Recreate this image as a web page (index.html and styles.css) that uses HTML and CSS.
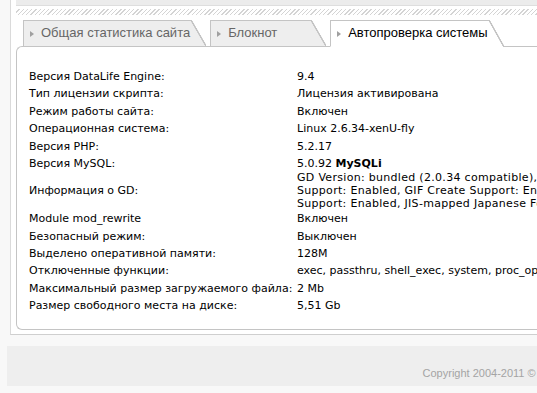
FILE: index.html
```html
<!DOCTYPE html>
<html>
<head>
    <meta charset="utf-8">
    <title>Автопроверка системы</title>
    <link rel="stylesheet" href="styles.css">
</head>
<body>
    <div class="page">
        <div class="frame">
            <div class="topbar"></div>
            <div class="hatch"></div>

            <ul class="tabs">
                <li class="tab">Общая статистика сайта</li>
                <li class="tab">Блокнот</li>
                <li class="tab tab-active">Автопроверка системы</li>
            </ul>

            <div class="panel">
                <table class="info">
                    <tr><td class="label">Версия DataLife Engine:</td><td>9.4</td></tr>
                    <tr><td class="label">Тип лицензии скрипта:</td><td>Лицензия активирована</td></tr>
                    <tr><td class="label">Режим работы сайта:</td><td>Включен</td></tr>
                    <tr><td class="label">Операционная система:</td><td>Linux 2.6.34-xenU-fly</td></tr>
                    <tr><td class="label">Версия PHP:</td><td>5.2.17</td></tr>
                    <tr><td class="label">Версия MySQL:</td><td>5.0.92 <b>MySQLi</b></td></tr>
                    <tr class="row-gd">
                        <td class="label">Информация о GD:</td>
                        <td class="gd">GD Version: bundled (2.0.34 compatible), FreeType Support: Enabled, FreeType Linkage: with freetype, GIF Read<br>Support: Enabled, GIF Create Support: Enabled, JPG Support: Enabled, PNG Support: Enabled, WBMP<br>Support: Enabled, JIS-mapped Japanese Font Support: Disabled</td>
                    </tr>
                    <tr><td class="label">Module mod_rewrite</td><td>Включен</td></tr>
                    <tr><td class="label">Безопасный режим:</td><td>Выключен</td></tr>
                    <tr><td class="label">Выделено оперативной памяти:</td><td>128M</td></tr>
                    <tr><td class="label">Отключенные функции:</td><td>exec, passthru, shell_exec, system, proc_open, popen, show_source</td></tr>
                    <tr><td class="label">Максимальный размер загружаемого файла:</td><td>2 Mb</td></tr>
                    <tr><td class="label">Размер свободного места на диске:</td><td>5,51 Gb</td></tr>
                </table>
            </div>
        </div>

        <div class="footer">Copyright 2004-2011 &copy; SoftNews Media Group. All rights reserved.</div>
    </div>
</body>
</html>
```

FILE: styles.css
```css
* {
    box-sizing: border-box;
}

body {
    margin: 0;
    background: #f8f8f8;
    overflow: hidden;
    font-family: "DejaVu Sans", Verdana, sans-serif;
    font-size: 11px;
    color: #000;
}

.page {
    width: 759px;
    padding-left: 7px;
}

/* outer white frame */
.frame {
    margin-left: 3px;
    padding: 0 0 4px 5px;
    background: #fff;
    border-left: 1px solid #dadada;
    border-bottom: 1px solid #cfcfcf;
}

.topbar {
    height: 6px;
    background: #ececec;
    border-bottom: 1px solid #dedede;
}

.hatch {
    height: 6px;
    margin-top: 3px;
    background: repeating-linear-gradient(135deg, #fff 0 2px, #d4d4d4 2px 3px);
}

/* tabs */
.tabs {
    display: flex;
    list-style: none;
    margin: 5px 0 -1px;
    padding: 0 0 0 7px;
}

.tab {
    position: relative;
    z-index: 1;
    min-width: 101px;
    height: 27px;
    margin-right: 19px;
    padding: 0 1px 1px 6px;
    background: #eeeeee;
    border: 1px solid #c4c4c4;
    border-right: none;
    font-family: "Liberation Sans", Arial, sans-serif;
    font-size: 13px;
    line-height: 24px;
    color: #666;
    white-space: nowrap;
}

.tab::before {
    content: "";
    display: inline-block;
    margin-right: 7px;
    vertical-align: 0;
    border-left: 4px solid #a0a0a0;
    border-top: 3px solid transparent;
    border-bottom: 3px solid transparent;
}

.tab::after {
    content: "";
    position: absolute;
    top: -1px;
    bottom: 0;
    left: 100%;
    width: 15px;
    background: linear-gradient(to top right, #eeeeee calc(50% - 1px), #c4c4c4 calc(50% - 0.5px), #c4c4c4 calc(50% + 0.5px), transparent calc(50% + 1px));
}

.tab-active {
    background: #fff;
    border-bottom-color: #fff;
    color: #000;
}

.tab-active::after {
    bottom: -1px;
    background: linear-gradient(to top right, #fff calc(50% - 1px), #c4c4c4 calc(50% - 0.5px), #c4c4c4 calc(50% + 0.5px), transparent calc(50% + 1px));
}

/* content panel */
.panel {
    padding: 21px 0 14px 12px;
    border: 1px solid #c4c4c4;
    border-right: none;
    border-radius: 6px 0 0 6px;
    background: #fff;
}

.info {
    width: 700px;
    table-layout: fixed;
    border-collapse: collapse;
}

.info td {
    padding: 2px 0;
    line-height: 13.4px;
    vertical-align: middle;
    white-space: nowrap;
}

.info .label {
    width: 268px;
}

.info .row-gd td {
    padding: 0;
    line-height: 12.6px;
}

.info .gd {
    letter-spacing: 0.3px;
}

/* footer */
.footer {
    margin-top: 11px;
    height: 40px;
    padding: 20px 10px 0 0;
    background: #eeeeee;
    font-family: "Liberation Sans", Arial, sans-serif;
    font-size: 11px;
    line-height: 14px;
    color: #a4a4a4;
    text-align: right;
}
```
